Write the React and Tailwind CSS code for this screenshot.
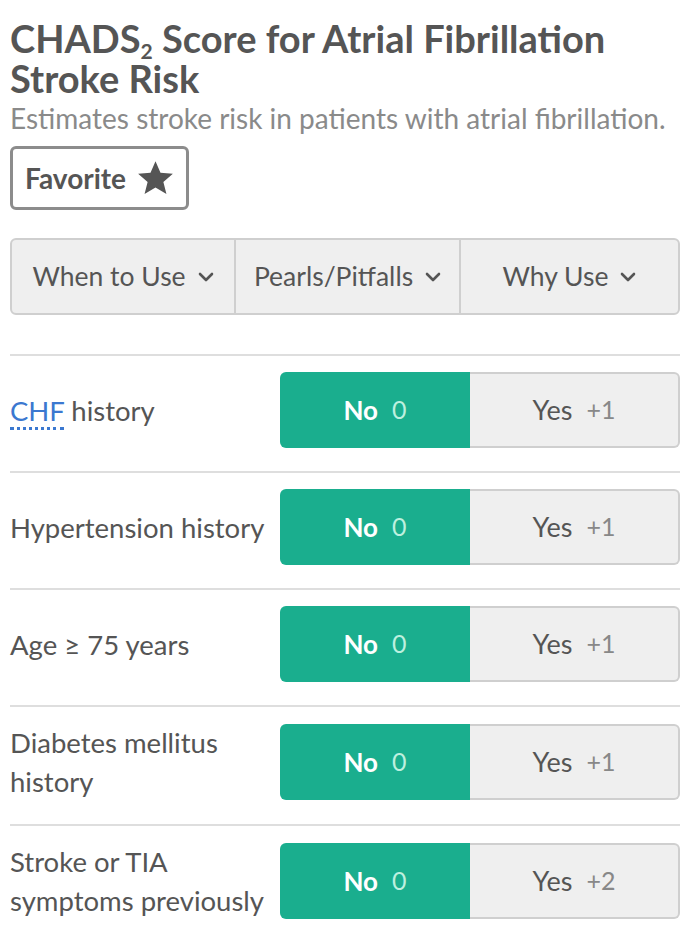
import React from 'react';

const font = { fontFamily: 'Lato, "Open Sans", sans-serif' };

const Chevron = () => (
  <svg width="16" height="10" viewBox="0 0 16 10" className="ml-3 shrink-0">
    <path d="M2 2 L8 8 L14 2" fill="none" stroke="#555" strokeWidth="2.6" strokeLinecap="round" strokeLinejoin="round" />
  </svg>
);

const Star = () => (
  <svg width="39" height="37" viewBox="0 0 24 23" className="ml-[10px]">
    <path d="M12 0.8 L15.1 8 L22.8 8.6 L16.9 13.6 L18.8 21.2 L12 17.1 L5.2 21.2 L7.1 13.6 L1.2 8.6 L8.9 8 Z" fill="#555" />
  </svg>
);

const criteria = [
  { label: <><span className="text-[#3b78d0] border-b-[3px] border-dotted border-[#3b78d0]">CHF</span> history</>, pts: '+1' },
  { label: 'Hypertension history', pts: '+1' },
  { label: 'Age ≥ 75 years', pts: '+1' },
  { label: <>Diabetes mellitus<br />history</>, pts: '+1' },
  { label: <>Stroke or TIA<br />symptoms previously</>, pts: '+2' },
];

const Row = ({ label, pts }) => (
  <div className="flex items-center border-t-2 border-[#dedede] pt-4 pb-[23px]">
    <div className="w-[270px] shrink-0 text-[27.5px] leading-[39px] text-[#555] whitespace-nowrap">{label}</div>
    <div className="flex flex-1 h-[76px]">
      <div className="w-[190px] shrink-0 bg-[#1aae8e] rounded-l-md flex items-center justify-center">
        <span className="text-white font-bold text-[26px]">No</span>
        <span className="text-[#bdf0df] text-[25px] ml-[14px]">0</span>
      </div>
      <div className="flex-1 bg-[#efefef] border-2 border-l-0 border-[#cfcfcf] rounded-r-md flex items-center justify-center">
        <span className="text-[#555] text-[27px]">Yes</span>
        <span className="text-[#888] text-[25px] ml-[14px]">{pts}</span>
      </div>
    </div>
  </div>
);

export default function App() {
  return (
    <div className="w-[680px] bg-white pl-[10px] pt-[18px] pb-4 overflow-hidden" style={font}>
      <h1 className="text-[38px] leading-[40px] font-bold text-[#555] pr-4">
        CHADS<span className="text-[21px] leading-none relative top-[6px]">2</span> Score for Atrial Fibrillation Stroke Risk
      </h1>
      <p className="text-[28px] leading-[32px] text-[#8a8a8a] mt-[4px] whitespace-nowrap">
        Estimates stroke risk in patients with atrial fibrillation.
      </p>
      <button className="mt-[12px] w-[179px] h-[64px] border-[3px] border-[#8c8c8c] rounded-md flex items-center pl-[12px] text-[28px] font-bold text-[#555]">
        Favorite
        <Star />
      </button>
      <div className="mt-7 h-[77px] flex bg-[#efefef] border-2 border-[#cfcfcf] rounded-md text-[26.5px] text-[#555]">
        <div className="w-[224px] flex items-center justify-center border-r-2 border-[#cfcfcf] whitespace-nowrap">
          When to Use <Chevron />
        </div>
        <div className="w-[225px] flex items-center justify-center border-r-2 border-[#cfcfcf] whitespace-nowrap">
          Pearls/Pitfalls <Chevron />
        </div>
        <div className="flex-1 flex items-center justify-center">
          Why Use <Chevron />
        </div>
      </div>
      <div className="mt-[39px]">
        {criteria.map((c, i) => (
          <Row key={i} label={c.label} pts={c.pts} />
        ))}
      </div>
    </div>
  );
}
